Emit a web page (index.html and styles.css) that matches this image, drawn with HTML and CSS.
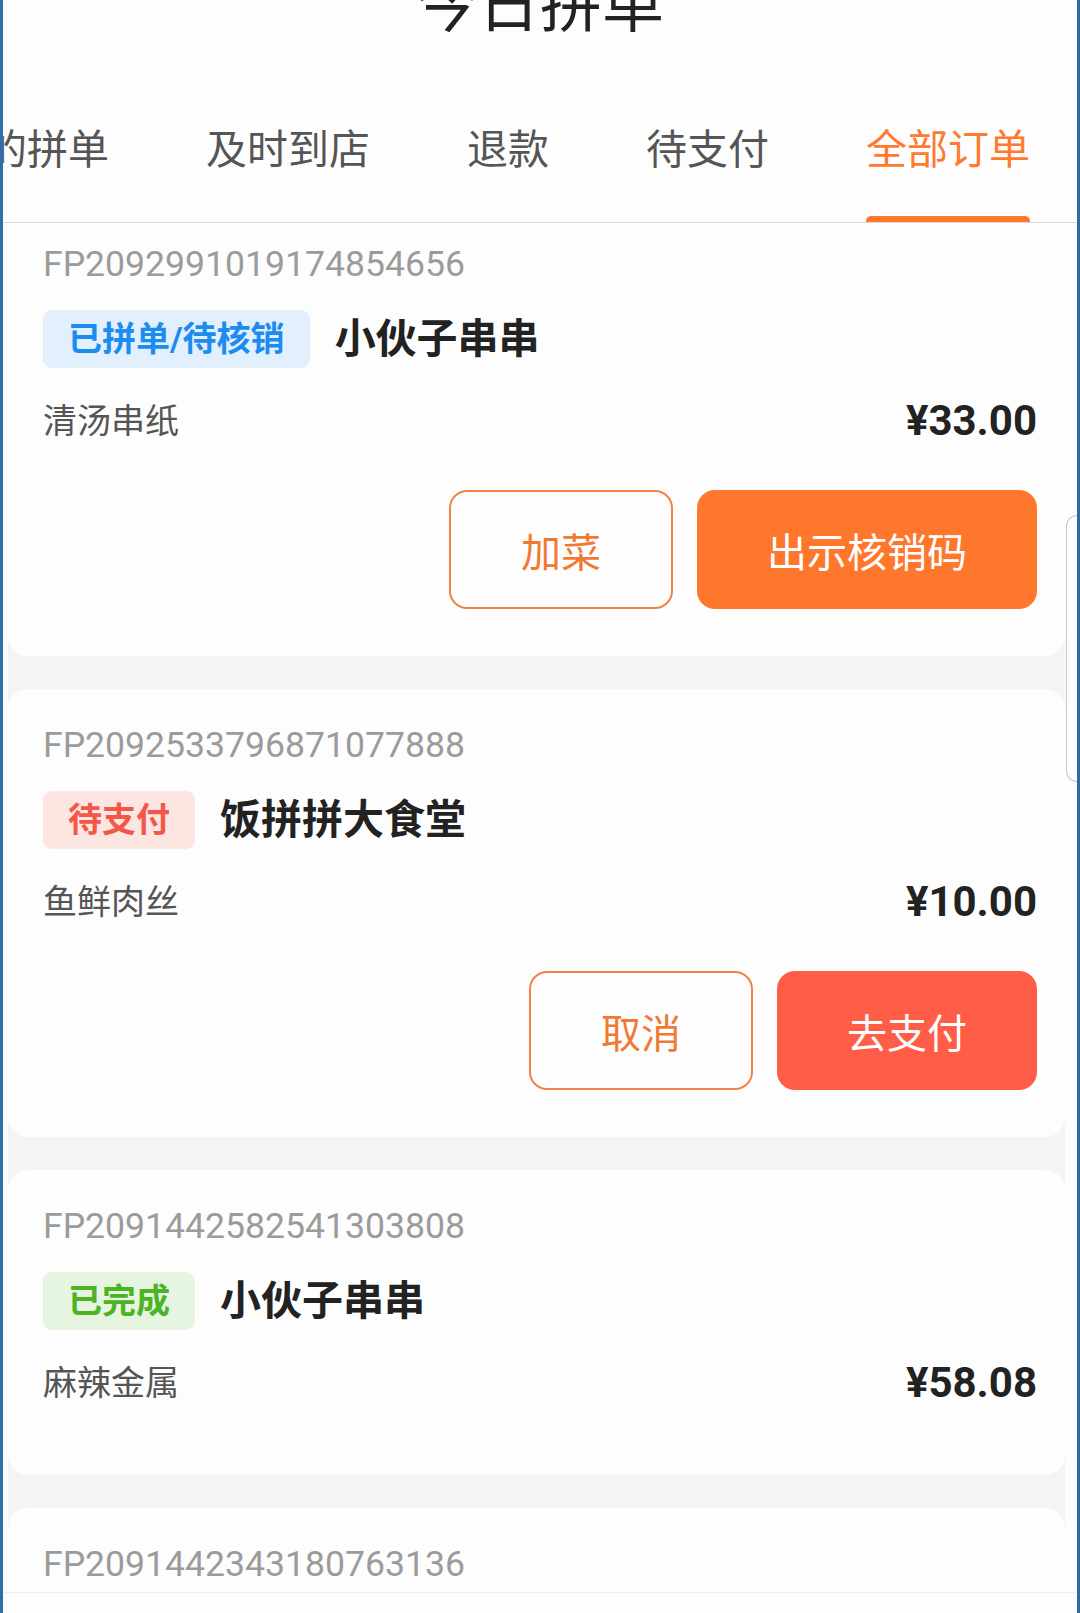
FILE: index.html
```html
<!DOCTYPE html>
<html lang="zh-CN">
<head>
  <meta charset="UTF-8" />
  <title>今日拼单</title>
  <link rel="stylesheet" href="styles.css">
</head>
<body>
  <div class="app">
    <header class="top">
      <h1 class="page-title">今日拼单</h1>
      <nav class="tabs-wrap">
        <div class="tabs">
          <div class="tab"><span>我的拼单</span><i class="bar"></i></div>
          <div class="tab"><span>及时到店</span><i class="bar"></i></div>
          <div class="tab"><span>退款</span><i class="bar"></i></div>
          <div class="tab"><span>待支付</span><i class="bar"></i></div>
          <div class="tab active"><span>全部订单</span><i class="bar"></i></div>
        </div>
      </nav>
    </header>

    <div class="body-row">
      <main class="list">
        <div class="list-inner">
          <div class="card">
            <div class="order-no">FP2092991019174854656</div>
            <div class="head">
              <span class="badge blue">已拼单/待核销</span>
              <span class="shop">小伙子串串</span>
            </div>
            <div class="line">
              <span class="dish">清汤串纸</span>
              <span class="price">¥33.00</span>
            </div>
            <div class="actions">
              <button class="btn ghost">加菜</button>
              <button class="btn solid">出示核销码</button>
            </div>
          </div>

          <div class="card">
            <div class="order-no">FP2092533796871077888</div>
            <div class="head">
              <span class="badge red">待支付</span>
              <span class="shop">饭拼拼大食堂</span>
            </div>
            <div class="line">
              <span class="dish">鱼鲜肉丝</span>
              <span class="price">¥10.00</span>
            </div>
            <div class="actions">
              <button class="btn ghost">取消</button>
              <button class="btn solid pay">去支付</button>
            </div>
          </div>

          <div class="card">
            <div class="order-no">FP2091442582541303808</div>
            <div class="head">
              <span class="badge green">已完成</span>
              <span class="shop">小伙子串串</span>
            </div>
            <div class="line">
              <span class="dish">麻辣金属</span>
              <span class="price">¥58.08</span>
            </div>
          </div>

          <div class="card">
            <div class="order-no">FP2091442343180763136</div>
          </div>
        </div>
      </main>
      <aside class="gutter"><div class="handle"></div></aside>
    </div>

    <footer class="bottom"></footer>
  </div>
</body>
</html>
```

FILE: styles.css
```css
* { box-sizing: border-box; }
html, body { margin: 0; padding: 0; }
body { font-family: Roboto, "Noto Sans CJK SC", sans-serif; background: #fdfdfd; color: #222; }

.app { height: 1613px; display: flex; flex-direction: column; overflow: hidden; border-left: 3px solid #2f6ea6; border-right: 3px solid #2c6aa0; background: #fdfdfd; }

.top { flex: none; background: #fdfdfd; border-bottom: 1px solid #e2d6d4; }
.page-title { margin: -34px 0 0; height: 80px; line-height: 80px; text-align: center; font-size: 62px; font-weight: 400; color: #222; }
.tabs-wrap { overflow: hidden; height: 176px; }
.tabs { display: flex; gap: 97px; margin-left: -58px; height: 100%; }
.tab { display: flex; flex-direction: column; align-items: stretch; flex: none; padding-top: 80px; font-size: 41px; line-height: 48px; color: #555; white-space: nowrap; }
.tab .bar { display: block; margin-top: auto; height: 6px; border-radius: 5px 5px 0 0; }
.tab.active { color: #ff7a2e; }
.tab.active .bar { background: #ff772b; }

.body-row { flex: 1; display: flex; min-height: 0; }
.list { flex: 1; margin-left: 5px; background: #f4f4f4; overflow: hidden; }
.list-inner { margin-top: -15px; display: flex; flex-direction: column; gap: 33px; }
.gutter { flex: none; width: 12px; background: #fdfdfd; }
.handle { margin-top: 292px; margin-left: 1px; height: 267px; border: 1.5px solid #c9c9c9; border-right: none; border-radius: 12px 0 0 12px; }

.card { background: #fdfdfd; border-radius: 20px; padding: 35px 28px 47px 35px; }
.order-no { font-size: 35.6px; line-height: 42px; color: #9b9b9b; }
.head { display: flex; align-items: center; gap: 25px; margin-top: 25px; height: 58px; }
.badge { height: 58px; line-height: 58px; padding: 0 25px; border-radius: 9px; font-size: 34px; font-weight: 700; }
.badge.blue { background: #e2effc; color: #1d8cf0; }
.badge.red { background: #fde5e1; color: #f2584a; }
.badge.green { background: #e5f5df; color: #4cb324; }
.shop { font-size: 41px; line-height: 58px; font-weight: 700; color: #222; }

.line { display: flex; justify-content: space-between; align-items: center; margin-top: 32px; margin-bottom: 24px; height: 42px; }
.dish { font-size: 34px; line-height: 42px; color: #555; }
.price { font-size: 42px; line-height: 42px; font-weight: 700; color: #222; }

.actions { display: flex; justify-content: flex-end; gap: 24px; margin-top: 48px; }
.btn { height: 119px; padding: 0 70px; border-radius: 18px; font-family: inherit; font-size: 40px; cursor: pointer; }
.btn.ghost { background: #fdfdfd; border: 2px solid #f28346; color: #f07a34; }
.btn.solid { background: #ff772d; border: none; color: #fff; }
.btn.solid.pay { background: #ff5d48; }

.bottom { flex: none; height: 21px; background: #fdfdfd; border-top: 1px solid #eee; }
```
